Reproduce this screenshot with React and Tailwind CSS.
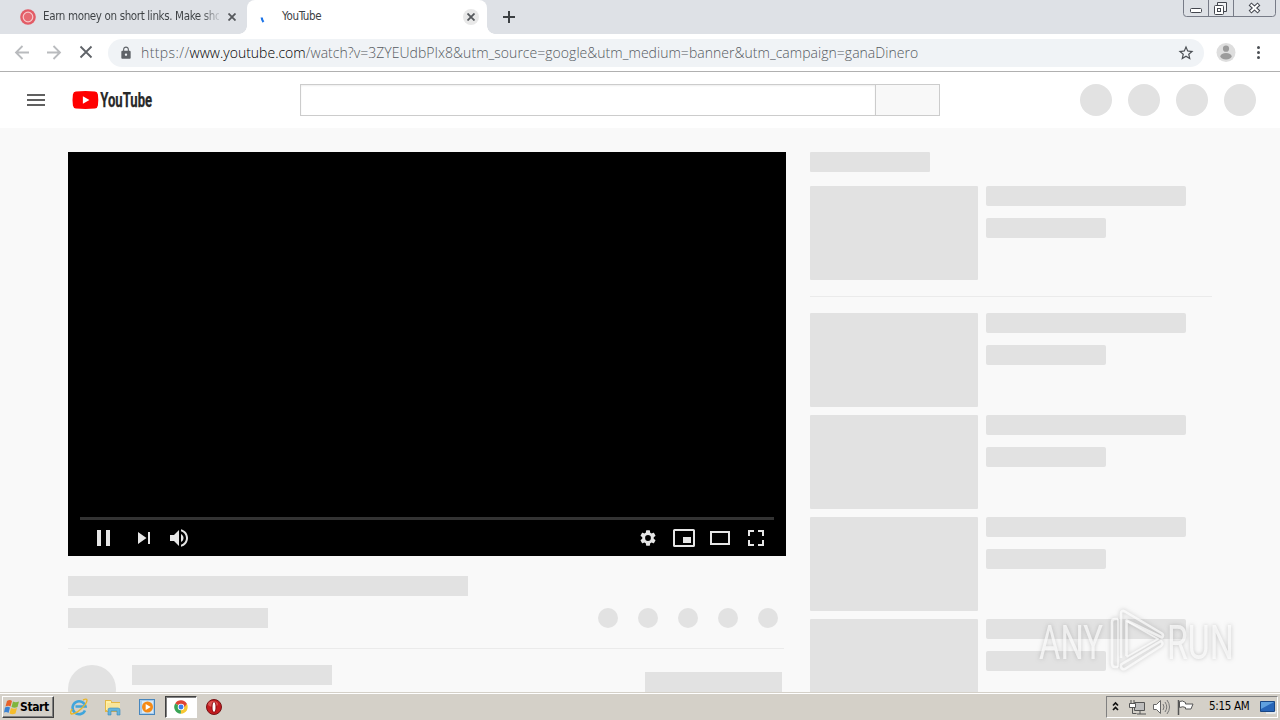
import { MdLock, MdStarBorder } from 'react-icons/md';

const related = [1, 2, 3, 4];

const Tab = ({ children, title, active }) => (
  <div
    className={
      active
        ? 'relative flex h-[34px] w-[240px] items-center rounded-t-lg bg-white pl-[13px] pr-2'
        : 'flex h-[34px] w-[247px] items-center pl-5 pr-2'
    }
  >
    <div className="flex w-4 shrink-0 justify-center">{children}</div>
    <div
      className={
        active
          ? 'ml-[6px] w-[179px] whitespace-nowrap text-[11.5px] tracking-[-0.35px] text-[#3c4043]'
          : 'ml-[7px] w-[176px] whitespace-nowrap bg-[linear-gradient(90deg,#3c4043_90%,#c4c7cc)] bg-clip-text text-[11.5px] tracking-[-0.36px] text-transparent'
      }
    >
      {title}
    </div>
    <div className={active ? 'ml-[2px] flex h-4 w-4 items-center justify-center rounded-full bg-[#e8e8e8]' : 'ml-[5px] flex h-4 w-4 items-center justify-center'}>
      <svg viewBox="0 0 8 8" className="h-2 w-2" stroke="#55585c" strokeWidth="1.800">
        <path d="M.5.500l7 7M7.500.500l-7 7" />
      </svg>
    </div>
    {active ? (
      <>
        <span className="absolute -left-2 bottom-0 h-2 w-2 bg-[radial-gradient(circle_at_0_0,transparent_7.5px,white_8px)]" />
        <span className="absolute -right-2 bottom-0 h-2 w-2 bg-[radial-gradient(circle_at_100%_0,transparent_7.5px,white_8px)]" />
      </>
    ) : null}
  </div>
);

const TabStrip = () => (
  <div className="flex h-[34px] shrink-0 bg-[#dee1e6] font-['DejaVu_Sans_Condensed','DejaVu_Sans',sans-serif] [font-stretch:condensed]">
    <Tab title="Earn money on short links. Make sho">
      <svg viewBox="0 0 16 16" className="h-4 w-4 shrink-0">
        <circle cx="8" cy="8" r="7.8" fill="#e25c66" />
        <circle cx="8" cy="8" r="4.8" fill="#e66a72" stroke="#f7c9cb" strokeWidth="1.2" />
      </svg>
    </Tab>
    <Tab title="YouTube" active>
      <svg viewBox="0 0 16 16" className="h-4 w-4 shrink-0">
        <path d="M1.700 8.500q.2 2.500 1.800 4.500" fill="none" stroke="#1a73e8" strokeWidth="2.200" />
      </svg>
    </Tab>
    <div className="ml-[14px] flex h-[34px] items-center">
      <svg viewBox="0 0 16 16" className="h-4 w-4" stroke="#3c4043" strokeWidth="2">
        <path d="M8 2v12M2 8h12" />
      </svg>
    </div>
    <svg viewBox="0 0 94 18" className="ml-auto mr-[3px] h-[18px] w-[94px]" fill="none" stroke="#777b87">
      <path d="M.5 0v13.500q0 3 3 3h86q3 0 3-3V0M25.500 0v16M50.500 0v16" />
      <g stroke="#43464e">
        <rect x="7.500" y="8.500" width="11" height="4" rx="1" fill="#fff" />
        <path d="M34.500 5V2.500h9v9H41" fill="#f2f3f5" />
        <rect x="31.500" y="5.500" width="9" height="9" rx="1" fill="#fff" />
        <rect x="34.500" y="8.500" width="3" height="3" />
      </g>
      <path d="M67 4l9 8M76 4l-9 8" stroke="#43464e" strokeWidth="4.200" />
      <path d="M67.700 4.600l7.600 6.800M75.300 4.600l-7.600 6.800" stroke="#fff" strokeWidth="2" />
    </svg>
  </div>
);

const Toolbar = () => (
  <div className="flex h-[38px] shrink-0 items-center border-b border-[#b0b0b0] bg-white pl-3">
    <svg viewBox="0 0 84 20" className="h-5 w-[84px] shrink-0" fill="none" strokeWidth="1.800">
      <g stroke="#b9bbbe">
        <path d="M17 9.500H4M10.500 3L4 9.500l6.500 6.500" />
        <path d="M35 9.500h13M41.500 3L48 9.500l-6.500 6.500" />
      </g>
      <path d="M68.500 3.500l11 11M79.500 3.500l-11 11" stroke="#5f6368" />
    </svg>
    <div className="ml-3 flex h-7 w-[1096px] shrink-0 items-center rounded-full bg-[#f0f3f6] pl-[11px] pr-[9px]">
      <MdLock className="h-[14px] w-[14px] text-[#5f6368]" />
      <div className="ml-[8px] whitespace-nowrap font-['Open_Sans',sans-serif] text-[14px] font-light leading-[26px] text-[#555a60]">
        <span className="tracking-[0.4px]">https://</span>
        <span className="text-[#000000]">www.youtube.com</span>
        <span className="tracking-[0.03px]">/watch?v=3ZYEUdbPIx8&amp;utm_source=google&amp;utm_medium=banner&amp;utm_campaign=ganaDinero</span>
      </div>
      <MdStarBorder className="ml-auto h-[18px] w-[18px] text-[#4b4f54]" />
    </div>
    <svg viewBox="0 0 20 20" className="ml-3 h-5 w-5 shrink-0">
      <circle cx="10" cy="9.500" r="9.500" fill="#dedede" />
      <circle cx="10" cy="5.700" r="3.100" fill="#9b9b9b" />
      <ellipse cx="10" cy="13.300" rx="5.600" ry="3.200" fill="#9b9b9b" />
    </svg>
    <svg viewBox="0 0 4 16" className="ml-[20px] h-4 w-1 shrink-0" fill="#4b4f54">
      <circle cx="2.500" cy="2.500" r="1.500" />
      <circle cx="2.500" cy="7.500" r="1.500" />
      <circle cx="2.500" cy="12.500" r="1.500" />
    </svg>
  </div>
);

const Masthead = () => (
  <header className="flex h-14 shrink-0 items-center bg-white pl-[27px] pr-6">
    <div className="flex h-3 w-[18px] flex-col justify-between">
      <span className="h-[2px] bg-[#606060]" />
      <span className="h-[2px] bg-[#606060]" />
      <span className="h-[2px] bg-[#606060]" />
    </div>
    <svg viewBox="0 0 90 28" className="ml-[27px] h-7 w-[90px]">
      <g transform="translate(.4 2)">
        <path d="M3.500 3.500Q13 2.700 22.500 3.500Q25 3.700 25.500 6.500Q26.300 12 25.500 17.500Q25 20.300 22.500 20.500Q13 21.300 3.500 20.500Q1 20.300.5 17.500Q-.3 12 .5 6.500Q1 3.700 3.500 3.500Z" fill="#f00" />
        <path d="M10.500 8.300v7.400l6.500-3.700z" fill="#fff" />
        <text x="27.800" y="19.200" textLength="52" lengthAdjust="spacingAndGlyphs" fill="#282828" stroke="#282828" strokeWidth=".25" className="font-['Roboto',sans-serif] text-[20.500px] font-bold">YouTube</text>
      </g>
    </svg>
    <div className="ml-[138px] flex h-8 w-[640px] border border-[#cccccc]">
      <div className="w-[575px] border-r border-[#cccccc] shadow-[inset_0_1px_2px_#eeeeee]" />
      <div className="flex-1 bg-[#f8f8f8]" />
    </div>
    <div className="ml-auto flex gap-4">
      <span className="h-8 w-8 rounded-full bg-[#e2e2e2]" />
      <span className="h-8 w-8 rounded-full bg-[#e2e2e2]" />
      <span className="h-8 w-8 rounded-full bg-[#e2e2e2]" />
      <span className="h-8 w-8 rounded-full bg-[#e2e2e2]" />
    </div>
  </header>
);

const Player = () => (
  <div className="flex h-[404px] w-[718px] flex-col justify-end bg-black px-3">
    <div className="h-[3px] bg-[#333333]" />
    <div className="flex h-9 items-center text-[#e6e6e6]">
      <svg viewBox="0 0 120 36" className="h-9 w-[120px]" fill="currentColor">
        <path d="M17 10h4v16h-4zM26 10h4v16h-4zM58 12v12l8.500-6zM68 12h2v12h-2z" />
        <path d="M90 15v6h4l5 5V10l-5 5zM101 14v8.100c1.500-.7 2.500-2.200 2.500-4s-1-3.300-2.500-4.100zM101 9.200v2.100c2.900.9 5 3.500 5 6.700s-2.100 5.900-5 6.700v2.100c4-.9 7-4.500 7-8.800s-3-7.900-7-8.800z" />
      </svg>
      <svg viewBox="0 0 144 36" className="ml-auto h-9 w-[144px]" fill="none" stroke="currentColor" strokeWidth="2">
        <g transform="translate(8.400 8.400) scale(.8)" stroke="none" fill="currentColor">
          <path fillRule="evenodd" d="M19.140 12.940c.04-.3.060-.61.060-.94s-.02-.64-.07-.94l2.030-1.580a.5.5 0 0 0 .12-.61l-1.920-3.320a.5.5 0 0 0-.59-.22l-2.390.96c-.5-.38-1.030-.7-1.620-.94l-.36-2.540a.5.5 0 0 0-.48-.41h-3.840a.5.500 0 0 0-.47.410l-.36 2.540c-.59.240-1.130.57-1.620.94l-2.390-.96a.5.500 0 0 0-.59.220L2.740 8.870a.5.500 0 0 0 .12.610l2.030 1.580c-.05.300-.09.630-.09.940s.02.640.07.940l-2.030 1.580a.5.500 0 0 0-.12.610l1.920 3.320c.12.220.37.290.59.220l2.390-.96c.5.380 1.030.7 1.620.94l.36 2.540c.05.240.24.410.48.410h3.840c.24 0 .44-.17.470-.41l.36-2.540c.59-.24 1.130-.56 1.620-.94l2.390.96c.22.080.47 0 .59-.22l1.920-3.320a.5.500 0 0 0-.12-.61zM12 15.600a3.600 3.600 0 1 1 0-7.200 3.600 3.600 0 0 1 0 7.200z" />
        </g>
        <rect x="44" y="10" width="20" height="16" rx=".6" />
        <path d="M53 17h8v6h-8z" fill="currentColor" stroke="none" />
        <path d="M81 12h18v12H81z" />
        <path d="M119 16v-5h5M128 11h5v5M133 20v5h-5M124 25h-5v-5" />
      </svg>
    </div>
  </div>
);

const VideoRow = () => (
  <div className="flex h-[94px] shrink-0 gap-2">
    <div className="h-[94px] w-[168px] rounded-[1px] bg-[#e2e2e2]" />
    <div className="flex flex-col gap-3">
      <div className="h-5 w-[200px] rounded-[2px] bg-[#e2e2e2]" />
      <div className="h-5 w-[120px] rounded-[2px] bg-[#e2e2e2]" />
    </div>
  </div>
);

const WatchPage = () => (
  <main className="flex min-h-0 flex-1 gap-6 overflow-hidden bg-[#f9f9f9] pl-[68px] pt-6">
    <section className="w-[718px] shrink-0">
      <Player />
      <div className="mt-5 h-5 w-[400px] bg-[#e2e2e2]" />
      <div className="mt-3 flex h-5 w-[716px] items-center justify-between pr-[6px]">
        <div className="h-5 w-[200px] bg-[#e2e2e2]" />
        <div className="flex gap-5">
          <span className="h-5 w-5 rounded-full bg-[#e2e2e2]" />
          <span className="h-5 w-5 rounded-full bg-[#e2e2e2]" />
          <span className="h-5 w-5 rounded-full bg-[#e2e2e2]" />
          <span className="h-5 w-5 rounded-full bg-[#e2e2e2]" />
          <span className="h-5 w-5 rounded-full bg-[#e2e2e2]" />
        </div>
      </div>
      <div className="mt-5 h-px w-[716px] bg-[#ebebeb]" />
      <div className="mt-4 flex w-[714px]">
        <div className="h-12 w-12 rounded-full bg-[#e2e2e2]" />
        <div className="ml-4 h-5 w-[200px] bg-[#e2e2e2]" />
        <div className="ml-auto mt-[7px] h-9 w-[137px] bg-[#e2e2e2]" />
      </div>
    </section>
    <aside className="flex w-[402px] shrink-0 flex-col">
      <div className="mb-[14px] h-5 w-[120px] shrink-0 rounded-[1px] bg-[#e2e2e2]" />
      <VideoRow />
      <div className="my-4 h-px shrink-0 bg-[#ebebeb]" />
      <div className="flex flex-col gap-2">
        {related.map((id) => (
          <VideoRow key={id} />
        ))}
      </div>
    </aside>
  </main>
);

const Watermark = () => (
  <svg viewBox="0 0 216 72" className="absolute left-[1034px] top-[604px] h-[72px] w-[216px] [filter:drop-shadow(0_0_2px_rgba(110,110,110,0.5))]">
    <g fill="#fff" fillOpacity=".7" className="font-['Roboto',sans-serif] text-[49px] font-normal">
      <text x="5" y="54.500" textLength="64" lengthAdjust="spacingAndGlyphs">ANY</text>
      <text x="133" y="54.500" textLength="67" lengthAdjust="spacingAndGlyphs">RUN</text>
    </g>
    <g fill="none" stroke="#fff" strokeOpacity=".7" strokeWidth="2.600" strokeLinejoin="round">
      <path d="M84 15h-3q-3 0-3 3v41q0 4 3 4h3" />
      <path d="M84 15v48" strokeWidth="1.600" />
      <path d="M87 54V10q0-4.500 4-2.500L128 29.500q2 2 0 4L92.500 16.500V52" />
      <path d="M87 60.500L127 37q3 2.500 0 5L91 65q-3 1-4-2z" />
      <path d="M92.500 17L124 35 92.500 53" strokeWidth="1.800" />
    </g>
  </svg>
);

const Taskbar = () => (
  <footer className="flex h-7 shrink-0 items-center border-t border-[#d4d0c8] bg-[#d4d0c8] pl-[2px] pr-[2px] font-['DejaVu_Sans_Condensed','DejaVu_Sans',sans-serif] [font-stretch:condensed] shadow-[inset_0_1px_0_#ffffff]">
    <div className="flex h-[22px] w-[52px] items-center border border-b-[#404040] border-l-white border-r-[#404040] border-t-white pl-px shadow-[inset_-1px_-1px_0_#808080]">
      <svg viewBox="0 0 16 16" className="h-4 w-4 shrink-0">
        <path d="M3 2q3-2 5 0L6.500 7.500q-2-1.500-5 0z" fill="#e8622a" />
        <path d="M9 2.500q2.500 1.500 6 0L13.500 8q-3 1.500-6 0z" fill="#7fb53c" />
        <path d="M1 8.500q3-1.500 5 0L4.500 14q-2-1.500-4.500-.5z" fill="#3b83d3" />
        <path d="M7 9q3 1.500 6 0l-1.500 5.500q-3 1.500-6 0z" fill="#f5bd2c" />
      </svg>
      <span className="text-[12px] font-bold tracking-[-0.4px] text-black">Start</span>
    </div>
    <div className="flex items-center pl-4">
      <svg viewBox="0 0 18 18" className="h-[18px] w-[18px]">
        <path d="M15 12.500a6.500 6.500 0 1 1 .5-4H5.500" fill="none" stroke="#3fa5dc" strokeWidth="2.600" />
        <path d="M13 2q4-2 4 .5Q16.500 6 11 11T1.500 16q-2-1 .7-5" fill="none" stroke="#e9b629" strokeWidth="1.400" />
      </svg>
      <svg viewBox="0 0 18 18" className="ml-4 h-[18px] w-[18px]">
        <path d="M1 2h6l1 2h8v10H1z" fill="#e4b746" />
        <path d="M2 3h5v9H2z" fill="#fff1a5" />
        <path d="M3 5h13v8H3z" fill="#f9e59a" />
        <path d="M4 17v-5q0-2 2-2h8q2 0 2 2v5h-3v-4H7v4z" fill="#64b5dc" stroke="#3a86b8" strokeWidth=".6" />
      </svg>
      <svg viewBox="0 0 18 18" className="ml-4 h-[18px] w-[18px]">
        <rect x="1.500" y="1.500" width="15" height="15" fill="#a9cdee" stroke="#4786bd" />
        <rect x="4" y="3" width="11" height="12" fill="#d8e9f6" />
        <circle cx="9.500" cy="9" r="5.500" fill="#f58a16" />
        <path d="M7.700 6v6l5-3z" fill="#fff" />
      </svg>
      <div className="ml-[9px] flex h-[22px] w-8 items-center justify-center border border-b-white border-l-[#404040] border-r-white border-t-[#404040] bg-white shadow-[inset_1px_1px_0_#808080]">
        <svg viewBox="0 0 16 16" className="h-[14px] w-[14px]">
          <path d="M8 8L1.400 4A7.600 7.600 0 0 1 14.700 4.300z" fill="#df4435" />
          <path d="M8 8l6.700-3.700A7.600 7.600 0 0 1 8 15.600L7 13z" fill="#f8c832" />
          <path d="M8 8L7.800 15.600A7.600 7.600 0 0 1 1.400 4z" fill="#3aa455" />
          <path d="M8 4.300h6.700L12 8z" fill="#df4435" />
          <circle cx="8" cy="8" r="3.700" fill="#fff" />
          <circle cx="8" cy="8" r="2.800" fill="#3b7ded" />
        </svg>
      </div>
      <svg viewBox="0 0 16 16" className="ml-[9px] h-4 w-4">
        <circle cx="8" cy="8" r="7.500" fill="#c41c20" stroke="#751416" />
        <ellipse cx="7" cy="5" rx="5" ry="3" fill="#dc5552" />
        <ellipse cx="8" cy="8" rx="2.600" ry="5.500" fill="#8d0c12" />
        <ellipse cx="8" cy="8" rx="1.500" ry="4.700" fill="#fff" />
      </svg>
    </div>
    <div className="ml-auto flex h-[22px] w-[172px] items-center border border-b-white border-l-[#808080] border-r-white border-t-[#808080]">
      <svg viewBox="0 0 88 20" className="h-5 w-[88px] shrink-0" fill="none">
        <path d="M6 8.500l2.500-2.500L11 8.500M6 13l2.500-2.500L11 13" stroke="#111" strokeWidth="1.700" />
        <path d="M27.500 5.500h10v8h-10z" fill="#bdbdbd" stroke="#555" />
        <path d="M30 17h9M33 14v3M24 3v3M27 3v3M22.500 6.500h6v4h-6zM25.500 11v5.500h4" stroke="#555" />
        <path d="M23 7h5v3h-5z" fill="#fff" />
        <path d="M46.500 7.500h3l4-4v13l-4-4h-3z" fill="#fff" stroke="#666" />
        <path d="M56 7q2 3 0 6M58 5q3.500 5 0 10M60 3q5 7 0 14" stroke="#777" />
        <path d="M71.500 3v15" stroke="#555" strokeWidth="1.500" />
        <path d="M72.500 4.500q3-1.500 6 1v1.500h7.500l-2 5h-5.500v-1.500q-2.500-1.500-6 0z" fill="#fff" stroke="#555" />
      </svg>
      <span className="ml-[14px] whitespace-nowrap text-[11.5px] tracking-[-0.3px] text-black">5:15 AM</span>
      <svg viewBox="0 0 18 16" className="ml-auto h-4 w-[18px]">
        <path d="M1.500 2.500h14v10h-14z" fill="#2765b8" stroke="#184685" />
        <path d="M2 3h13L2 10z" fill="#5fa0df" />
        <path d="M7 14h9l1-2" stroke="#e8eef5" strokeWidth="1.500" fill="none" />
      </svg>
    </div>
  </footer>
);

const App = () => (
  <div className="relative flex h-[720px] w-[1280px] flex-col overflow-hidden">
    <TabStrip />
    <Toolbar />
    <Masthead />
    <WatchPage />
    <Taskbar />
    <Watermark />
  </div>
);

export default App;
